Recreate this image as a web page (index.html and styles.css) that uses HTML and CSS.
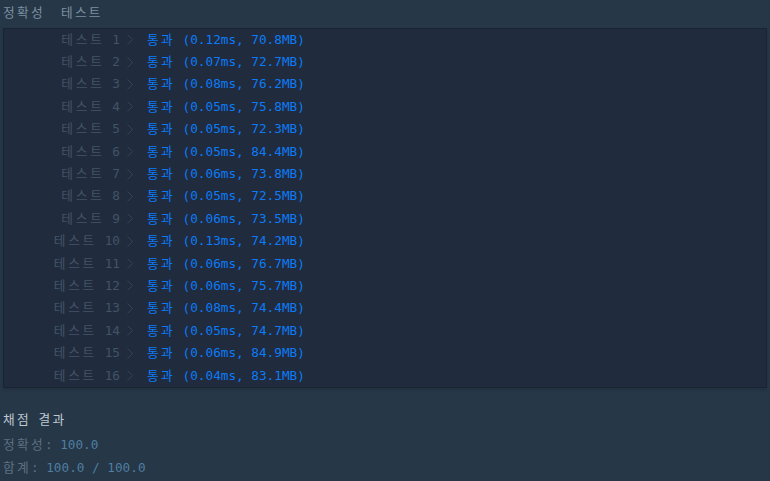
FILE: index.html
```html
<!DOCTYPE html>
<html lang="ko">
<head>
    <meta charset="UTF-8">
    <meta name="viewport" content="width=device-width, initial-scale=1.0">
    <title>채점 결과</title>
    <link rel="stylesheet" href="styles.css">
</head>
<body>
    <div class="console-heading">
        <span class="ko">정확성</span>
        <span class="ko">테스트</span>
    </div>

    <div class="console-box">
        <div class="test-row"><span class="label"><span class="ko">테스트</span> 1</span><svg class="chevron" width="6" height="11" viewBox="0 0 6 11"><polyline points="0.5,0.5 5.5,5.5 0.5,10.5"/></svg><span class="result"><span class="ko">통과</span> (0.12ms, 70.8MB)</span></div>
        <div class="test-row"><span class="label"><span class="ko">테스트</span> 2</span><svg class="chevron" width="6" height="11" viewBox="0 0 6 11"><polyline points="0.5,0.5 5.5,5.5 0.5,10.5"/></svg><span class="result"><span class="ko">통과</span> (0.07ms, 72.7MB)</span></div>
        <div class="test-row"><span class="label"><span class="ko">테스트</span> 3</span><svg class="chevron" width="6" height="11" viewBox="0 0 6 11"><polyline points="0.5,0.5 5.5,5.5 0.5,10.5"/></svg><span class="result"><span class="ko">통과</span> (0.08ms, 76.2MB)</span></div>
        <div class="test-row"><span class="label"><span class="ko">테스트</span> 4</span><svg class="chevron" width="6" height="11" viewBox="0 0 6 11"><polyline points="0.5,0.5 5.5,5.5 0.5,10.5"/></svg><span class="result"><span class="ko">통과</span> (0.05ms, 75.8MB)</span></div>
        <div class="test-row"><span class="label"><span class="ko">테스트</span> 5</span><svg class="chevron" width="6" height="11" viewBox="0 0 6 11"><polyline points="0.5,0.5 5.5,5.5 0.5,10.5"/></svg><span class="result"><span class="ko">통과</span> (0.05ms, 72.3MB)</span></div>
        <div class="test-row"><span class="label"><span class="ko">테스트</span> 6</span><svg class="chevron" width="6" height="11" viewBox="0 0 6 11"><polyline points="0.5,0.5 5.5,5.5 0.5,10.5"/></svg><span class="result"><span class="ko">통과</span> (0.05ms, 84.4MB)</span></div>
        <div class="test-row"><span class="label"><span class="ko">테스트</span> 7</span><svg class="chevron" width="6" height="11" viewBox="0 0 6 11"><polyline points="0.5,0.5 5.5,5.5 0.5,10.5"/></svg><span class="result"><span class="ko">통과</span> (0.06ms, 73.8MB)</span></div>
        <div class="test-row"><span class="label"><span class="ko">테스트</span> 8</span><svg class="chevron" width="6" height="11" viewBox="0 0 6 11"><polyline points="0.5,0.5 5.5,5.5 0.5,10.5"/></svg><span class="result"><span class="ko">통과</span> (0.05ms, 72.5MB)</span></div>
        <div class="test-row"><span class="label"><span class="ko">테스트</span> 9</span><svg class="chevron" width="6" height="11" viewBox="0 0 6 11"><polyline points="0.5,0.5 5.5,5.5 0.5,10.5"/></svg><span class="result"><span class="ko">통과</span> (0.06ms, 73.5MB)</span></div>
        <div class="test-row"><span class="label"><span class="ko">테스트</span> 10</span><svg class="chevron" width="6" height="11" viewBox="0 0 6 11"><polyline points="0.5,0.5 5.5,5.5 0.5,10.5"/></svg><span class="result"><span class="ko">통과</span> (0.13ms, 74.2MB)</span></div>
        <div class="test-row"><span class="label"><span class="ko">테스트</span> 11</span><svg class="chevron" width="6" height="11" viewBox="0 0 6 11"><polyline points="0.5,0.5 5.5,5.5 0.5,10.5"/></svg><span class="result"><span class="ko">통과</span> (0.06ms, 76.7MB)</span></div>
        <div class="test-row"><span class="label"><span class="ko">테스트</span> 12</span><svg class="chevron" width="6" height="11" viewBox="0 0 6 11"><polyline points="0.5,0.5 5.5,5.5 0.5,10.5"/></svg><span class="result"><span class="ko">통과</span> (0.06ms, 75.7MB)</span></div>
        <div class="test-row"><span class="label"><span class="ko">테스트</span> 13</span><svg class="chevron" width="6" height="11" viewBox="0 0 6 11"><polyline points="0.5,0.5 5.5,5.5 0.5,10.5"/></svg><span class="result"><span class="ko">통과</span> (0.08ms, 74.4MB)</span></div>
        <div class="test-row"><span class="label"><span class="ko">테스트</span> 14</span><svg class="chevron" width="6" height="11" viewBox="0 0 6 11"><polyline points="0.5,0.5 5.5,5.5 0.5,10.5"/></svg><span class="result"><span class="ko">통과</span> (0.05ms, 74.7MB)</span></div>
        <div class="test-row"><span class="label"><span class="ko">테스트</span> 15</span><svg class="chevron" width="6" height="11" viewBox="0 0 6 11"><polyline points="0.5,0.5 5.5,5.5 0.5,10.5"/></svg><span class="result"><span class="ko">통과</span> (0.06ms, 84.9MB)</span></div>
        <div class="test-row"><span class="label"><span class="ko">테스트</span> 16</span><svg class="chevron" width="6" height="11" viewBox="0 0 6 11"><polyline points="0.5,0.5 5.5,5.5 0.5,10.5"/></svg><span class="result"><span class="ko">통과</span> (0.04ms, 83.1MB)</span></div>
    </div>

    <div class="summary">
        <div class="summary-title"><span class="ko">채점</span> <span class="ko">결과</span></div>
        <div class="summary-line"><span class="ko">정확성</span>: <span class="score">100.0</span></div>
        <div class="summary-line"><span class="ko">합계</span>: <span class="score">100.0 / 100.0</span></div>
    </div>
</body>
</html>
```

FILE: styles.css
```css
body {
    margin: 0;
    padding: 0 3px;
    background: #263747;
    font-family: "DejaVu Sans Mono", "Noto Sans CJK KR", monospace;
    font-size: 12.7px;
    color: #8092a3;
}

.ko {
    letter-spacing: 2.3px;
}

.console-heading {
    display: flex;
    gap: 16px;
    height: 28px;
    line-height: 25px;
    color: #7d90a1;
}

.console-box {
    background: #202b3d;
    border: 1px solid #1a2331;
    box-shadow: 0 2px 3px rgba(0, 0, 0, 0.12);
}

.test-row {
    display: flex;
    align-items: center;
    height: 18.4px;
    padding-bottom: 4px;
    white-space: pre;
}

.label {
    width: 116px;
    text-align: right;
    color: #435367;
}

.label .ko {
    letter-spacing: 2.8px;
}

.chevron {
    margin-top: 3px;
    margin-left: 7px;
    margin-right: 14px;
    fill: none;
    stroke: #344255;
    stroke-width: 1;
}

.result {
    color: #0d7bf7;
}

.summary {
    padding-top: 20px;
}

.summary-title {
    line-height: 24px;
    margin-bottom: 1px;
    color: #bfc8d1;
}

.summary-line {
    line-height: 23px;
    color: #5d7083;
    white-space: pre;
}

.score {
    color: #4e7ea2;
}
```
